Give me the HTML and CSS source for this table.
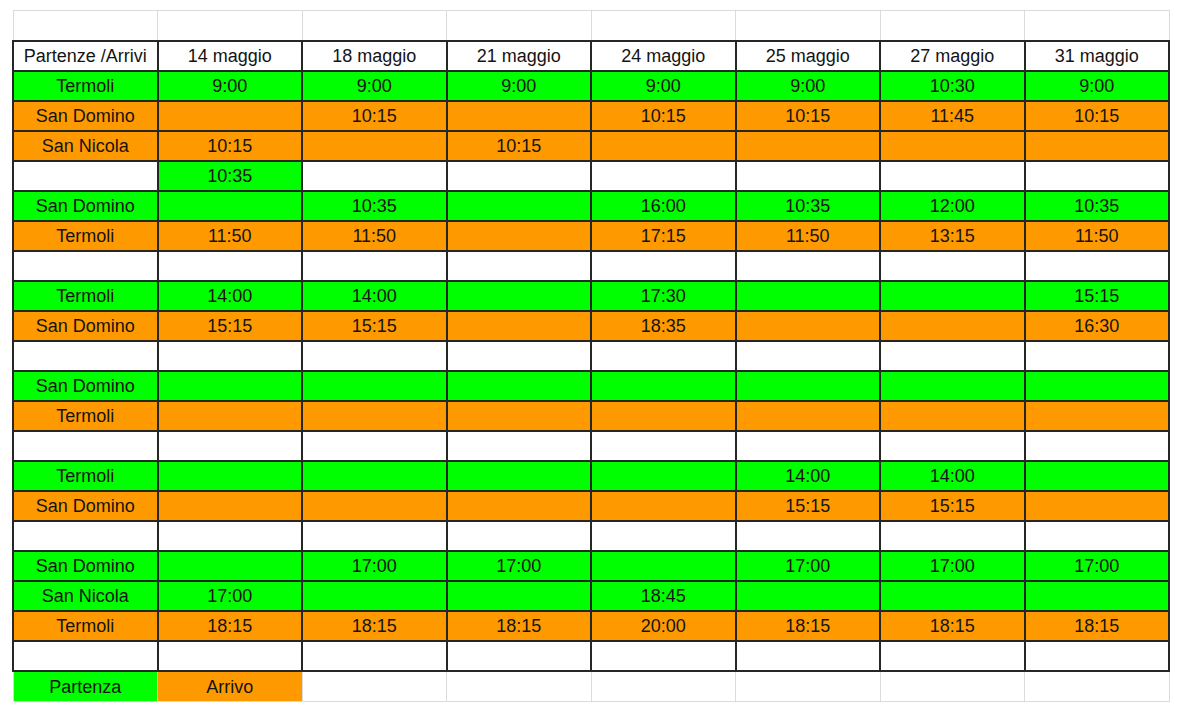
FILE: index.html
```html
<!DOCTYPE html>
<html lang="it">
<head>
<meta charset="utf-8">
<title>Orari</title>
<link rel="stylesheet" href="styles.css">
</head>
<body>
<table class="timetable">
  <tr class="ghost"><td></td><td></td><td></td><td></td><td></td><td></td><td></td><td></td></tr>
  <tr class="head">
    <td>Partenze /Arrivi</td><td>14 maggio</td><td>18 maggio</td><td>21 maggio</td><td>24 maggio</td><td>25 maggio</td><td>27 maggio</td><td>31 maggio</td>
  </tr>
  <tr class="dep"><td>Termoli</td><td>9:00</td><td>9:00</td><td>9:00</td><td>9:00</td><td>9:00</td><td>10:30</td><td>9:00</td></tr>
  <tr class="arr"><td>San Domino</td><td></td><td>10:15</td><td></td><td>10:15</td><td>10:15</td><td>11:45</td><td>10:15</td></tr>
  <tr class="arr"><td>San Nicola</td><td>10:15</td><td></td><td>10:15</td><td></td><td></td><td></td><td></td></tr>
  <tr class="blank"><td></td><td class="c-dep">10:35</td><td></td><td></td><td></td><td></td><td></td><td></td></tr>
  <tr class="dep"><td>San Domino</td><td></td><td>10:35</td><td></td><td>16:00</td><td>10:35</td><td>12:00</td><td>10:35</td></tr>
  <tr class="arr"><td>Termoli</td><td>11:50</td><td>11:50</td><td></td><td>17:15</td><td>11:50</td><td>13:15</td><td>11:50</td></tr>
  <tr class="blank"><td></td><td></td><td></td><td></td><td></td><td></td><td></td><td></td></tr>
  <tr class="dep"><td>Termoli</td><td>14:00</td><td>14:00</td><td></td><td>17:30</td><td></td><td></td><td>15:15</td></tr>
  <tr class="arr"><td>San Domino</td><td>15:15</td><td>15:15</td><td></td><td>18:35</td><td></td><td></td><td>16:30</td></tr>
  <tr class="blank"><td></td><td></td><td></td><td></td><td></td><td></td><td></td><td></td></tr>
  <tr class="dep"><td>San Domino</td><td></td><td></td><td></td><td></td><td></td><td></td><td></td></tr>
  <tr class="arr"><td>Termoli</td><td></td><td></td><td></td><td></td><td></td><td></td><td></td></tr>
  <tr class="blank"><td></td><td></td><td></td><td></td><td></td><td></td><td></td><td></td></tr>
  <tr class="dep"><td>Termoli</td><td></td><td></td><td></td><td></td><td>14:00</td><td>14:00</td><td></td></tr>
  <tr class="arr"><td>San Domino</td><td></td><td></td><td></td><td></td><td>15:15</td><td>15:15</td><td></td></tr>
  <tr class="blank"><td></td><td></td><td></td><td></td><td></td><td></td><td></td><td></td></tr>
  <tr class="dep"><td>San Domino</td><td></td><td>17:00</td><td>17:00</td><td></td><td>17:00</td><td>17:00</td><td>17:00</td></tr>
  <tr class="dep"><td>San Nicola</td><td>17:00</td><td></td><td></td><td>18:45</td><td></td><td></td><td></td></tr>
  <tr class="arr"><td>Termoli</td><td>18:15</td><td>18:15</td><td>18:15</td><td>20:00</td><td>18:15</td><td>18:15</td><td>18:15</td></tr>
  <tr class="blank"><td></td><td></td><td></td><td></td><td></td><td></td><td></td><td></td></tr>
  <tr class="ghost legend"><td class="c-dep">Partenza</td><td class="c-arr">Arrivo</td><td></td><td></td><td></td><td></td><td></td><td></td></tr>
</table>
</body>
</html>
```

FILE: styles.css
```css
html, body {
  margin: 0;
  padding: 0;
  background: #ffffff;
}

body {
  padding: 10px 0 0 12px;
  font-family: "Liberation Sans", Arial, sans-serif;
  color: #141414;
}

.timetable {
  border-collapse: collapse;
  table-layout: fixed;
  width: 1158px;
  font-size: 18px;
}

.timetable td {
  height: 28px;
  padding: 0;
  text-align: center;
  vertical-align: middle;
  border: 2px solid #262626;
  line-height: 28px;
  white-space: nowrap;
  overflow: hidden;
}

.timetable tr.ghost td {
  border: 1px solid #dadada;
  height: 29px;
}

.timetable tr.head td {
  background: #ffffff;
}

.dep td,
td.c-dep {
  background: #00ff00;
}

.arr td,
td.c-arr {
  background: #ff9900;
}

.blank td {
  background: #ffffff;
}

.blank td.c-dep {
  background: #00ff00;
}

.legend td.c-dep {
  background: #00ff00;
}

.legend td.c-arr {
  background: #ff9900;
}
```
